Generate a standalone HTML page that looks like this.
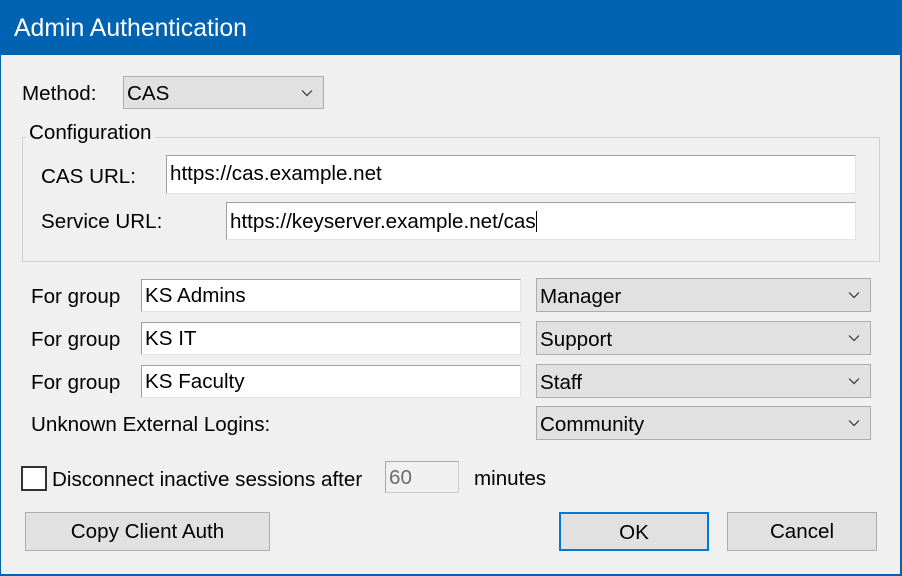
<!DOCTYPE html>
<html><head><meta charset="utf-8"><style>
*{margin:0;padding:0;box-sizing:border-box}
body{width:902px;height:576px;background:#0063b1;font-family:"Liberation Sans",sans-serif;font-size:20.6px;color:#000;overflow:hidden;position:relative}
#win{position:absolute;left:1px;top:55px;width:899px;height:519px;background:#f0f0f0}
.a{position:absolute;white-space:nowrap}
.t{position:absolute;white-space:nowrap;line-height:22px}
.in{position:absolute;background:#fff;border:1px solid #e3e3e3;border-top-color:#a0a0a0;border-left-color:#a0a0a0;padding-left:3px;line-height:31px}
.cb{position:absolute;background:#e1e1e1;border:1px solid #adadad;padding-left:3px}
.cb svg{position:absolute;right:10px;top:50%;margin-top:-4px}
.btn{position:absolute;background:#e1e1e1;border:1px solid #adadad;text-align:center;line-height:38px}
</style></head><body>
<div class="a" style="left:14px;top:15px;color:#fff;font-size:24.8px">Admin Authentication</div>
<div id="win"></div>
<div class="t" style="left:22px;top:83px">Method:</div>
<div class="cb" style="left:123px;top:76px;width:201px;height:33px;line-height:33px">CAS<svg width="12" height="8"><path d="M1 1.5l5 5 5-5" fill="none" stroke="#333" stroke-width="1.2"/></svg></div>
<div class="a" style="left:22px;top:137px;width:858px;height:125px;border:1px solid #d0d0d0"></div>
<div class="t" style="left:26px;top:122px;background:#f0f0f0;padding:0 3px">Configuration</div>
<div class="t" style="left:41px;top:166px">CAS URL:</div>
<div class="in" style="left:166px;top:155px;width:690px;height:39px;line-height:36px">https://cas.example.net</div>
<div class="t" style="left:41px;top:211px">Service URL:</div>
<div class="in" style="left:226px;top:202px;width:630px;height:38px;line-height:38px">https://keyserver.example.net/cas<span style="display:inline-block;width:1px;height:21px;background:#000;vertical-align:-4px"></span></div>

<div class="t" style="left:31px;top:286px">For group</div>
<div class="in" style="left:141px;top:279px;width:380px;height:33px">KS Admins</div>
<div class="cb" style="left:536px;top:278px;width:335px;height:34px;line-height:36px">Manager<svg width="12" height="8"><path d="M1 1.5l5 5 5-5" fill="none" stroke="#333" stroke-width="1.2"/></svg></div>

<div class="t" style="left:31px;top:329px">For group</div>
<div class="in" style="left:141px;top:322px;width:380px;height:33px">KS IT</div>
<div class="cb" style="left:536px;top:321px;width:335px;height:34px;line-height:36px">Support<svg width="12" height="8"><path d="M1 1.5l5 5 5-5" fill="none" stroke="#333" stroke-width="1.2"/></svg></div>

<div class="t" style="left:31px;top:372px">For group</div>
<div class="in" style="left:141px;top:365px;width:380px;height:33px">KS Faculty</div>
<div class="cb" style="left:536px;top:364px;width:335px;height:34px;line-height:36px">Staff<svg width="12" height="8"><path d="M1 1.5l5 5 5-5" fill="none" stroke="#333" stroke-width="1.2"/></svg></div>

<div class="t" style="left:31px;top:414px">Unknown External Logins:</div>
<div class="cb" style="left:536px;top:406px;width:335px;height:34px;line-height:36px">Community<svg width="12" height="8"><path d="M1 1.5l5 5 5-5" fill="none" stroke="#333" stroke-width="1.2"/></svg></div>

<div class="a" style="left:21px;top:466px;width:26px;height:25px;background:#fff;border:2px solid #333"></div>
<div class="t" style="left:52px;top:469px">Disconnect inactive sessions after</div>
<div class="in" style="left:385px;top:461px;width:74px;height:32px;background:#f0f0f0;color:#6d6d6d;border-color:#ccc;border-top-color:#a8a8a8;border-left-color:#a8a8a8">60</div>
<div class="t" style="left:474px;top:468px">minutes</div>

<div class="btn" style="left:25px;top:512px;width:245px;height:39px">Copy Client Auth</div>
<div class="btn" style="left:559px;top:512px;width:150px;height:39px;border:2px solid #0078d7;line-height:37px">OK</div>
<div class="btn" style="left:727px;top:512px;width:150px;height:39px">Cancel</div>
</body></html>
